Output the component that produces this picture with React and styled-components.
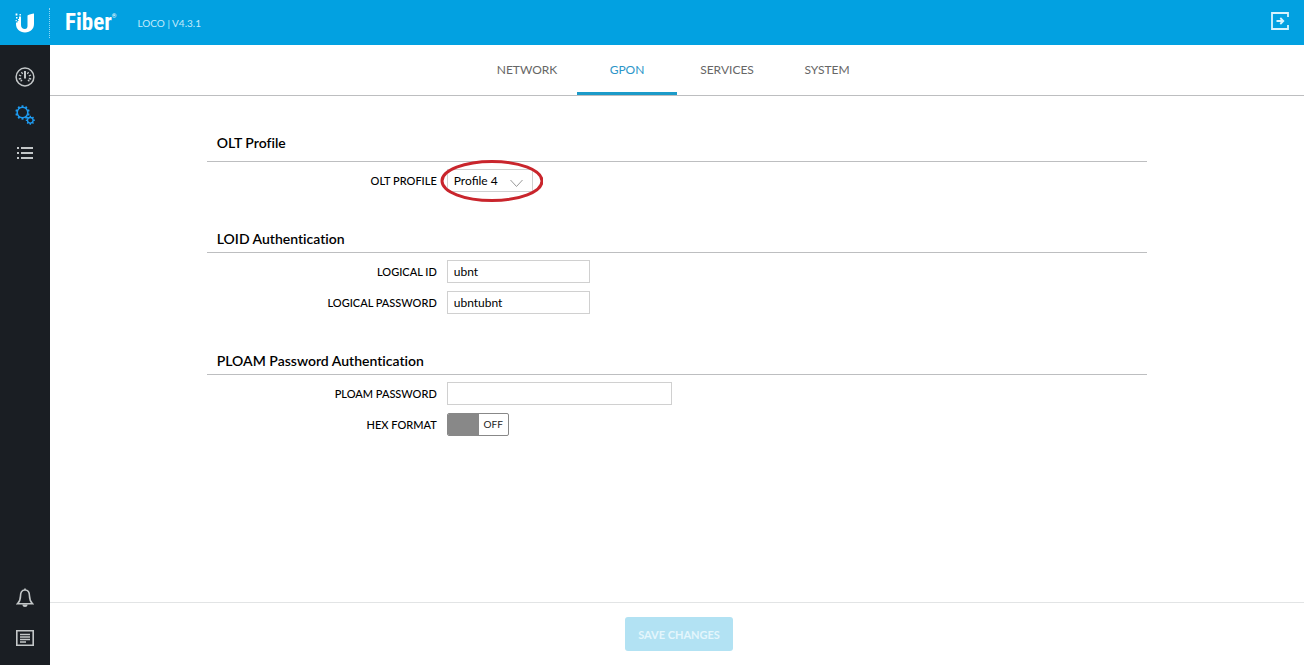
import { useState } from "react";
import styled, { createGlobalStyle } from "styled-components";

const GlobalStyle = createGlobalStyle`
    * {
        box-sizing: border-box;
    }
    body {
        margin: 0;
        background: #fff;
        color: #000;
        font-family: Lato, "Liberation Sans", sans-serif;
        font-size: 12px;
        font-variant-ligatures: none;
    }
    button, input, select {
        font-family: inherit;
    }
`

const Page = styled.div`
    display: flex;
    flex-direction: column;
    min-height: 100vh;
`

const Header = styled.header`
    display: flex;
    align-items: center;
    height: 45px;
    padding-right: 14px;
    background: #02a1e1;
    color: #fff;
`

const Brand = styled.a`
    display: flex;
    justify-content: center;
    align-items: center;
    width: 50px;
    height: 30px;
    border-right: 1px dotted #8fd6f5;
`

const Product = styled.span`
    margin-left: 15px;
    font-family: "Roboto Condensed", Roboto, sans-serif;
    font-size: 23px;
    font-weight: 700;
    line-height: 28px;
`

const Registered = styled.sup`
    font-size: 6px;
    line-height: 8px;
    vertical-align: 12px;
`

const Version = styled.span`
    flex-grow: 1;
    margin-left: 21px;
    font-size: 10px;
    line-height: 12px;
    color: #c4ebfb;
`

const IconButton = styled.button`
    display: flex;
    padding: 0 0 3px;
    border: 0;
    background: transparent;
    color: #d9f3fd;
    cursor: pointer;
`

const Body = styled.div`
    display: flex;
    flex-grow: 1;
`

const Sidebar = styled.nav`
    display: flex;
    flex-direction: column;
    justify-content: space-between;
    width: 50px;
    padding: 13px 0 7px;
    background: #1a1e23;
`

const SideGroup = styled.div`
    display: flex;
    flex-direction: column;
`

const SideLink = styled.a`
    display: flex;
    justify-content: center;
    align-items: center;
    height: ${({ $tall }) => $tall ? "40px" : "38px"};
    color: ${({ $active }) => $active ? "#1e9bf0" : "#c3c7c8"};
`

const Main = styled.main`
    display: flex;
    flex-direction: column;
    flex-grow: 1;
`

const Tabs = styled.nav`
    display: flex;
    justify-content: center;
    border-bottom: 1px solid #bdbec0;
`

const Tab = styled.a`
    width: 100px;
    height: 50px;
    border-bottom: 3px solid ${({ $active }) => $active ? "#1c9bc9" : "transparent"};
    color: ${({ $active }) => $active ? "#2b95c8" : "#666"};
    font-size: 12px;
    line-height: 50px;
    text-align: center;
    text-decoration: none;
`

const Form = styled.form`
    display: flex;
    flex-direction: column;
    flex-grow: 1;
`

const Content = styled.div`
    display: flex;
    flex-direction: column;
    flex-grow: 1;
    gap: 37px;
    width: 75%;
    margin: 0 auto;
    padding-top: 37px;
`

const SectionTitle = styled.h2`
    margin: 0 0 7px;
    padding: 0 10px ${({ $spaced }) => $spaced ? "8px" : "3px"};
    border-bottom: 1px solid #bdbec0;
    font-size: 14px;
    font-weight: 600;
    line-height: 20px;
`

const Rows = styled.div`
    display: flex;
    flex-direction: column;
    gap: 8px;
`

const Row = styled.div`
    display: flex;
    align-items: center;
    gap: 10px;
`

const Label = styled.label`
    width: 230px;
    font-size: 11px;
    font-weight: 500;
    line-height: 22px;
    text-align: right;
    text-transform: uppercase;
`

const TextInput = styled.input`
    width: ${({ $wide }) => $wide ? "225px" : "143px"};
    height: 23px;
    padding: 0 6px;
    border: 1px solid #d0d0d0;
    border-radius: 0;
    color: #000;
    font-size: 12px;
`

const SelectBox = styled.div`
    position: relative;
    width: 86px;
    height: 23px;
`

const Select = styled.select`
    width: 100%;
    height: 100%;
    padding: 0 6px;
    border: 1px solid #d0d0d0;
    border-radius: 0;
    appearance: none;
    background: #fff;
    color: #000;
    font-size: 12px;
`

const Chevron = styled.svg`
    position: absolute;
    top: 10px;
    right: 10px;
    pointer-events: none;
`

const Highlight = styled.svg`
    position: absolute;
    top: -10px;
    left: -8px;
    pointer-events: none;
`

const Switch = styled.button`
    display: flex;
    flex-direction: ${({ $on }) => $on ? "row-reverse" : "row"};
    width: 62px;
    height: 23px;
    padding: 0;
    overflow: hidden;
    border: 1px solid #888;
    border-radius: 2px;
    background: #fff;
    color: #222;
    font-size: 10px;
    line-height: 21px;
    cursor: pointer;
`

const SwitchKnob = styled.span`
    width: 31px;
    height: 21px;
    background: #888;
`

const SwitchText = styled.span`
    flex-grow: 1;
    text-align: center;
`

const Footer = styled.footer`
    display: flex;
    justify-content: center;
    padding: 14px 0 14px 4px;
    border-top: 1px solid #e2e4e5;
`

const SaveButton = styled.button`
    height: 34px;
    padding: 0 13px;
    border: 0;
    border-radius: 3px;
    background: #b2e2f3;
    color: #e4f6fc;
    font-size: 11px;
    font-weight: 700;
`

const LogoIcon = () => (
    <svg width="20" height="20" viewBox="0 0 20 20" fill="#fff" aria-hidden="true">
        <path d="M6 3.500V12c0 2.600 1.600 4 4 4 1.500 0 2.500-1 2.500-3V2.500C14 1.500 17 .5 19 .4V11c0 5-3.500 8.400-9 8.400S1 16 1 11V9.500h1.500V8H4V3.500z" />
        <path d="M.6.6h1.800v1.800H.6zM4.500 1h1.400v1.400H4.500zM1 4h1.500v1.500H1zM3 6h1.500v1.500H3zM.6 7h1.200v1.200H.6z" />
    </svg>
)

const LogoutIcon = () => (
    <svg width="20" height="20" viewBox="0 0 20 20" fill="none" stroke="currentColor" strokeWidth="1.800" aria-hidden="true">
        <path d="M18 6V2H2v16h16v-4" />
        <path d="M6.500 10H13M10.300 7l3 3-3 3" />
    </svg>
)

const GaugeIcon = () => (
    <svg width="20" height="20" viewBox="0 0 20 20" fill="none" stroke="currentColor" strokeWidth="1.500" aria-hidden="true">
        <circle cx="10" cy="10" r="8.900" />
        <path d="M10 4v7.500" strokeWidth="2" />
        <path d="M6.500 5l1.100 2M13.500 5l-1.100 2M4 8l2.200 1M16 8l-2.200 1M3.800 12l2.400-.5M16.200 12l-2.400-.5M5.600 14.300l1.500-1.300M14.400 14.300l-1.500-1.300" strokeWidth="1.300" />
    </svg>
)

const teeth = (count) => Array.from({ length: count }, (_, i) => i * 360 / count)

const GearsIcon = () => (
    <svg width="20" height="20" viewBox="0 0 20 20" fill="none" stroke="currentColor" aria-hidden="true">
        <circle cx="7.500" cy="7.500" r="5.300" strokeWidth="1.500" />
        {teeth(10).map(a => <path key={a} d="M7.500 2.200V.3" strokeWidth="1.900" transform={`rotate(${a} 7.500 7.500)`} />)}
        <circle cx="15.300" cy="15.300" r="2.800" strokeWidth="1.300" />
        {teeth(8).map(a => <path key={a} d="M15.300 12.500v-1.700" strokeWidth="1.400" transform={`rotate(${a} 15.300 15.300)`} />)}
    </svg>
)

const ListIcon = () => (
    <svg width="16" height="14" viewBox="0 0 16 14" fill="currentColor" aria-hidden="true">
        <path d="M0 1h2v2H0zM4 1h12v2H4zM0 6h2v2H0zM4 6h12v2H4zM0 11h2v2H0zM4 11h12v2H4z" />
    </svg>
)

const BellIcon = () => (
    <svg width="18" height="20" viewBox="0 0 18 20" fill="none" stroke="currentColor" strokeWidth="1.600" aria-hidden="true">
        <path d="M9 2C5.500 2 4.500 5 4.500 8c0 4-1.300 6-3 7.700h15C14.800 14 13.500 12 13.500 8c0-3-1-6-4.500-6z" />
        <path d="M9 .4V2" />
        <path d="M6.400 16.500h5.200C11.500 18.200 10.500 19 9 19s-2.500-.8-2.600-2.500z" fill="currentColor" stroke="none" />
    </svg>
)

const LogIcon = () => (
    <svg width="18" height="16" viewBox="0 0 18 16" fill="none" stroke="currentColor" strokeWidth="1.600" aria-hidden="true">
        <path d="M.8.8h16.400v14.400H.8z" />
        <path d="M4 4.500h10M4 7h10M4 9.500h10M4 12h6" strokeWidth="1.300" />
    </svg>
)

const tabs = ["NETWORK", "GPON", "SERVICES", "SYSTEM"]

const App = () => {
    const [profile, setProfile] = useState("4")
    const [hex, setHex] = useState(false)

    return (
        <>
            <GlobalStyle />
            <Page>
                <Header>
                    <Brand href="#" aria-label="Home"><LogoIcon /></Brand>
                    <Product>Fiber<Registered>®</Registered></Product>
                    <Version>LOCO | V4.3.1</Version>
                    <IconButton type="button" aria-label="Log out"><LogoutIcon /></IconButton>
                </Header>
                <Body>
                    <Sidebar>
                        <SideGroup>
                            <SideLink href="#dashboard" aria-label="Dashboard"><GaugeIcon /></SideLink>
                            <SideLink href="#settings" aria-label="Settings" $active><GearsIcon /></SideLink>
                            <SideLink href="#clients" aria-label="List"><ListIcon /></SideLink>
                        </SideGroup>
                        <SideGroup>
                            <SideLink href="#alerts" aria-label="Notifications" $tall><BellIcon /></SideLink>
                            <SideLink href="#log" aria-label="Log" $tall><LogIcon /></SideLink>
                        </SideGroup>
                    </Sidebar>
                    <Main>
                        <Tabs>
                            {tabs.map(tab => <Tab
                                key={tab}
                                href={`#${tab.toLowerCase()}`}
                                $active={tab === "GPON"}
                            >{tab}</Tab>)}
                        </Tabs>
                        <Form onSubmit={e => e.preventDefault()}>
                            <Content>
                                <section>
                                    <SectionTitle $spaced>OLT Profile</SectionTitle>
                                    <Rows>
                                        <Row>
                                            <Label htmlFor="profile">OLT Profile</Label>
                                            <SelectBox>
                                                <Select id="profile" value={profile} onChange={e => setProfile(e.target.value)}>
                                                    {["1", "2", "3", "4"].map(n => <option key={n} value={n}>Profile {n}</option>)}
                                                </Select>
                                                <Chevron width="13" height="9" viewBox="0 0 13 9" fill="none" stroke="#999">
                                                    <path d="M.5 1l6 6.500 6-6.500" />
                                                </Chevron>
                                                <Highlight width="104" height="44" viewBox="0 0 104 44" fill="none" stroke="#c9252c" strokeWidth="3">
                                                    <ellipse cx="53" cy="22" rx="50" ry="19.500" />
                                                </Highlight>
                                            </SelectBox>
                                        </Row>
                                    </Rows>
                                </section>
                                <section>
                                    <SectionTitle>LOID Authentication</SectionTitle>
                                    <Rows>
                                        <Row>
                                            <Label htmlFor="loid">Logical ID</Label>
                                            <TextInput id="loid" type="text" defaultValue="ubnt" />
                                        </Row>
                                        <Row>
                                            <Label htmlFor="loid-password">Logical Password</Label>
                                            <TextInput id="loid-password" type="text" defaultValue="ubntubnt" />
                                        </Row>
                                    </Rows>
                                </section>
                                <section>
                                    <SectionTitle>PLOAM Password Authentication</SectionTitle>
                                    <Rows>
                                        <Row>
                                            <Label htmlFor="ploam">PLOAM Password</Label>
                                            <TextInput id="ploam" type="text" $wide />
                                        </Row>
                                        <Row>
                                            <Label htmlFor="hex">Hex Format</Label>
                                            <Switch id="hex" type="button" role="switch" aria-checked={hex} $on={hex} onClick={() => setHex(!hex)}>
                                                <SwitchKnob />
                                                <SwitchText>{hex ? "ON" : "OFF"}</SwitchText>
                                            </Switch>
                                        </Row>
                                    </Rows>
                                </section>
                            </Content>
                            <Footer>
                                <SaveButton type="submit" disabled>SAVE CHANGES</SaveButton>
                            </Footer>
                        </Form>
                    </Main>
                </Body>
            </Page>
        </>
    )
}

export default App;
